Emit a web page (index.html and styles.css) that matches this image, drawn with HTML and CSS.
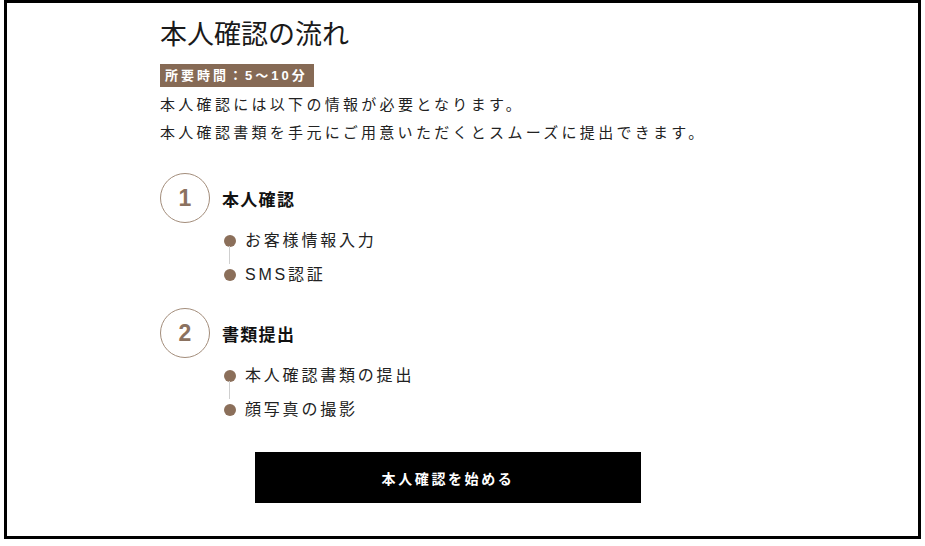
FILE: index.html
```html
<!DOCTYPE html>
<html lang="ja">
<head>
<meta charset="utf-8">
<title>本人確認の流れ</title>
<link rel="stylesheet" href="styles.css">
</head>
<body>
<div class="frame">
  <div class="content">
    <h1 class="title">本人確認の流れ</h1>
    <div class="badge">所要時間：5〜10分</div>
    <p class="lead">本人確認には以下の情報が必要となります。<br>本人確認書類を手元にご用意いただくとスムーズに提出できます。</p>
    <ol class="steps">
      <li class="step">
        <div class="step-head"><span class="step-num">1</span><span class="step-title">本人確認</span></div>
        <ul class="subs">
          <li class="sub">お客様情報入力</li>
          <li class="sub">SMS認証</li>
        </ul>
      </li>
      <li class="step">
        <div class="step-head"><span class="step-num">2</span><span class="step-title">書類提出</span></div>
        <ul class="subs">
          <li class="sub">本人確認書類の提出</li>
          <li class="sub">顔写真の撮影</li>
        </ul>
      </li>
    </ol>
    <button class="start" type="button">本人確認を始める</button>
  </div>
</div>
</body>
</html>
```
FILE: styles.css
```css
* { box-sizing: border-box; }
html, body { margin: 0; padding: 0; background: #fff; }
body {
  font-family: "Liberation Sans", "Noto Sans CJK JP", sans-serif;
  color: #1a1a1a;
}
.frame {
  margin-left: 4px;
  width: 917px;
  height: 539px;
  border: 3px solid #000;
  background: #fff;
}
.content {
  padding: 14px 0 0 153px;
  display: flex;
  flex-direction: column;
  align-items: flex-start;
}
.title {
  margin: 0;
  font-size: 27px;
  font-weight: 400;
  line-height: 36px;
  color: #1a1a1a;
}
.badge {
  margin-top: 11px;
  background: #866a55;
  color: #fff;
  font-size: 13px;
  font-weight: 700;
  letter-spacing: 3px;
  line-height: 23px;
  padding: 0 6px 0 5px;
}
.lead {
  margin: 3px 0 0;
  font-family: "Noto Sans CJK JP", sans-serif;
  font-size: 15px;
  line-height: 28px;
  letter-spacing: 3.3px;
  color: #222;
}
.steps {
  list-style: none;
  margin: 27px 0 0;
  padding: 0;
  display: flex;
  flex-direction: column;
  gap: 22px;
}
.step-head {
  display: flex;
  align-items: center;
  gap: 12px;
}
.step-num {
  width: 50px;
  height: 50px;
  border: 1px solid #a38d7b;
  border-radius: 50%;
  display: flex;
  align-items: center;
  justify-content: center;
  font-size: 23px;
  font-weight: 700;
  color: #8b7260;
}
.step-title {
  font-size: 17px;
  font-weight: 700;
  letter-spacing: 1.3px;
  color: #111;
}
.subs {
  list-style: none;
  margin: 7px 0 0 64px;
  padding: 0;
  display: flex;
  flex-direction: column;
  gap: 12px;
}
.sub {
  position: relative;
  display: flex;
  align-items: center;
  gap: 9px;
  font-family: "Liberation Sans", "Noto Sans CJK JP", sans-serif;
  font-size: 16px;
  line-height: 22px;
  letter-spacing: 2.8px;
  color: #222;
}
.sub::before {
  content: "";
  width: 12px;
  height: 12px;
  border-radius: 50%;
  background: #8b6f5a;
  flex: none;
}
.sub + .sub::after {
  content: "";
  position: absolute;
  left: 5px;
  top: -18px;
  width: 1px;
  height: 18px;
  background: #cfcfcf;
}
.start {
  margin: 31px 0 0 95px;
  width: 386px;
  height: 51px;
  border: 0;
  background: #000;
  color: #fff;
  font-family: "Noto Sans CJK JP", sans-serif;
  font-size: 14px;
  font-weight: 700;
  letter-spacing: 2.6px;
  cursor: pointer;
}
```
